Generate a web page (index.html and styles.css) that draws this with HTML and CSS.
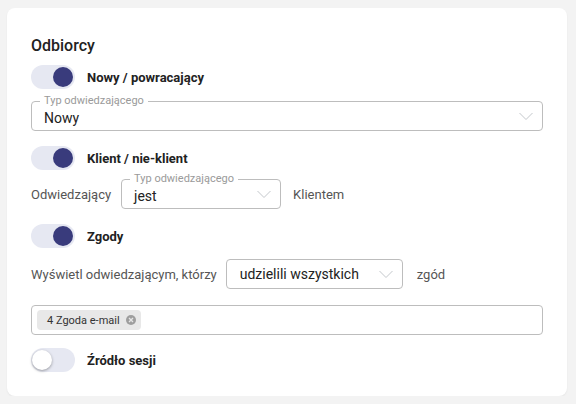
FILE: index.html
```html
<!DOCTYPE html>
<html lang="pl">
<head>
  <meta charset="UTF-8" />
  <meta name="viewport" content="width=device-width, initial-scale=1.0"/>
  <title>Odbiorcy</title>
  <link rel="stylesheet" href="styles.css">
</head>
<body>
  <div class="card">
    <h2 class="card-title">Odbiorcy</h2>

    <div class="switch-row r1">
      <span class="switch on"><span class="knob"></span></span>
      <span class="switch-label">Nowy / powracający</span>
    </div>

    <div class="field wide">
      <span class="field-label">Typ odwiedzającego</span>
      <span class="field-value">Nowy</span>
      <svg class="chevron" width="16" height="9" viewBox="0 0 16 9"><path d="M1.5 1 L8 7.5 L14.5 1" fill="none" stroke="#c4c8cc" stroke-width="1"/></svg>
    </div>

    <div class="switch-row r2">
      <span class="switch on"><span class="knob"></span></span>
      <span class="switch-label">Klient / nie-klient</span>
    </div>

    <div class="inline-row r3">
      <span class="text">Odwiedzający</span>
      <div class="field small">
        <span class="field-label">Typ odwiedzającego</span>
        <span class="field-value">jest</span>
        <svg class="chevron" width="16" height="9" viewBox="0 0 16 9"><path d="M1.5 1 L8 7.5 L14.5 1" fill="none" stroke="#c4c8cc" stroke-width="1"/></svg>
      </div>
      <span class="text">Klientem</span>
    </div>

    <div class="switch-row r4">
      <span class="switch on"><span class="knob"></span></span>
      <span class="switch-label">Zgody</span>
    </div>

    <div class="inline-row r5">
      <span class="text">Wyświetl odwiedzającym, którzy</span>
      <div class="field medium">
        <span class="field-value">udzielili wszystkich</span>
        <svg class="chevron" width="16" height="9" viewBox="0 0 16 9"><path d="M1.5 1 L8 7.5 L14.5 1" fill="none" stroke="#c4c8cc" stroke-width="1"/></svg>
      </div>
      <span class="text">zgód</span>
    </div>

    <div class="multi">
      <span class="chip">4 Zgoda e-mail
        <svg class="chip-x" width="10" height="10" viewBox="0 0 10 10"><circle cx="5" cy="5" r="5" fill="#9e9e9e"/><path d="M3 3 L7 7 M7 3 L3 7" stroke="#e6e6e6" stroke-width="1.4"/></svg>
      </span>
    </div>

    <div class="switch-row r6">
      <span class="switch"><span class="knob"></span></span>
      <span class="switch-label">Źródło sesji</span>
    </div>
  </div>
</body>
</html>
```

FILE: styles.css
```css
body {
  margin: 0;
  background: #f3f3f3;
  font-family: Roboto, "Liberation Sans", Arial, sans-serif;
  color: #222;
}

.card {
  margin: 8px 9px 0 7px;
  height: 388px;
  box-sizing: border-box;
  background: #fff;
  border-radius: 8px;
  padding: 28px 24px 0 24px;
  box-shadow: 0 1px 2px rgba(0,0,0,0.06);
}

.card-title {
  margin: 0;
  font-size: 16px;
  font-weight: 500;
  line-height: 20px;
  color: #222;
}

.switch-row {
  display: flex;
  align-items: center;
  gap: 12px;
  height: 24px;
}

.switch {
  position: relative;
  width: 44px;
  height: 24px;
  border-radius: 12px;
  background: #e6e8f2;
  flex-shrink: 0;
}

.switch .knob {
  position: absolute;
  top: 2px;
  left: 1px;
  width: 20px;
  height: 20px;
  border-radius: 50%;
  background: #fff;
  box-shadow: 0 1px 3px rgba(0,0,0,0.35);
}

.switch.on .knob {
  left: 22px;
  background: #393b7c;
  box-shadow: none;
}

.switch-label {
  font-size: 13px;
  font-weight: 700;
  color: #222;
}

.field {
  position: relative;
  display: flex;
  align-items: center;
  height: 30px;
  box-sizing: border-box;
  border: 1px solid #bdbdbd;
  border-radius: 4px;
  padding: 0 8px 0 12px;
}

.field.wide {
  margin-top: 12px;
}

.field.small {
  width: 160px;
}

.field.medium {
  width: 177px;
  padding-left: 13px;
}

.field-label {
  position: absolute;
  left: 8px;
  top: -8px;
  padding: 0 4px;
  background: #fff;
  font-size: 11px;
  line-height: 13px;
  color: #9a9a9a;
}

.field-value {
  flex: 1;
  font-size: 14px;
  padding-top: 4px;
  color: #222;
}

.field.medium .field-value {
  padding-top: 0;
}

.inline-row {
  display: flex;
  align-items: center;
  gap: 12px;
}

.inline-row .text {
  font-size: 13px;
  color: #555;
}

.r1 {
  margin-top: 9px;
}

.r2 {
  margin-top: 15px;
}

.r3 {
  margin-top: 9px;
}

.r3 .field {
  margin-left: -2px;
}

.r4 {
  margin-top: 15px;
}

.r5 {
  margin-top: 11px;
  gap: 9px;
}

.r5 .field {
  margin-right: 5px;
}

.multi {
  margin-top: 16px;
  height: 30px;
  box-sizing: border-box;
  border: 1px solid #bdbdbd;
  border-radius: 4px;
  display: flex;
  align-items: center;
  padding-left: 5px;
}

.chip {
  display: inline-flex;
  align-items: center;
  gap: 6px;
  height: 20px;
  padding: 0 5px 0 10px;
  background: #e8e8e8;
  border-radius: 4px;
  font-size: 11px;
  color: #333;
}

.r6 {
  margin-top: 13px;
}
```
